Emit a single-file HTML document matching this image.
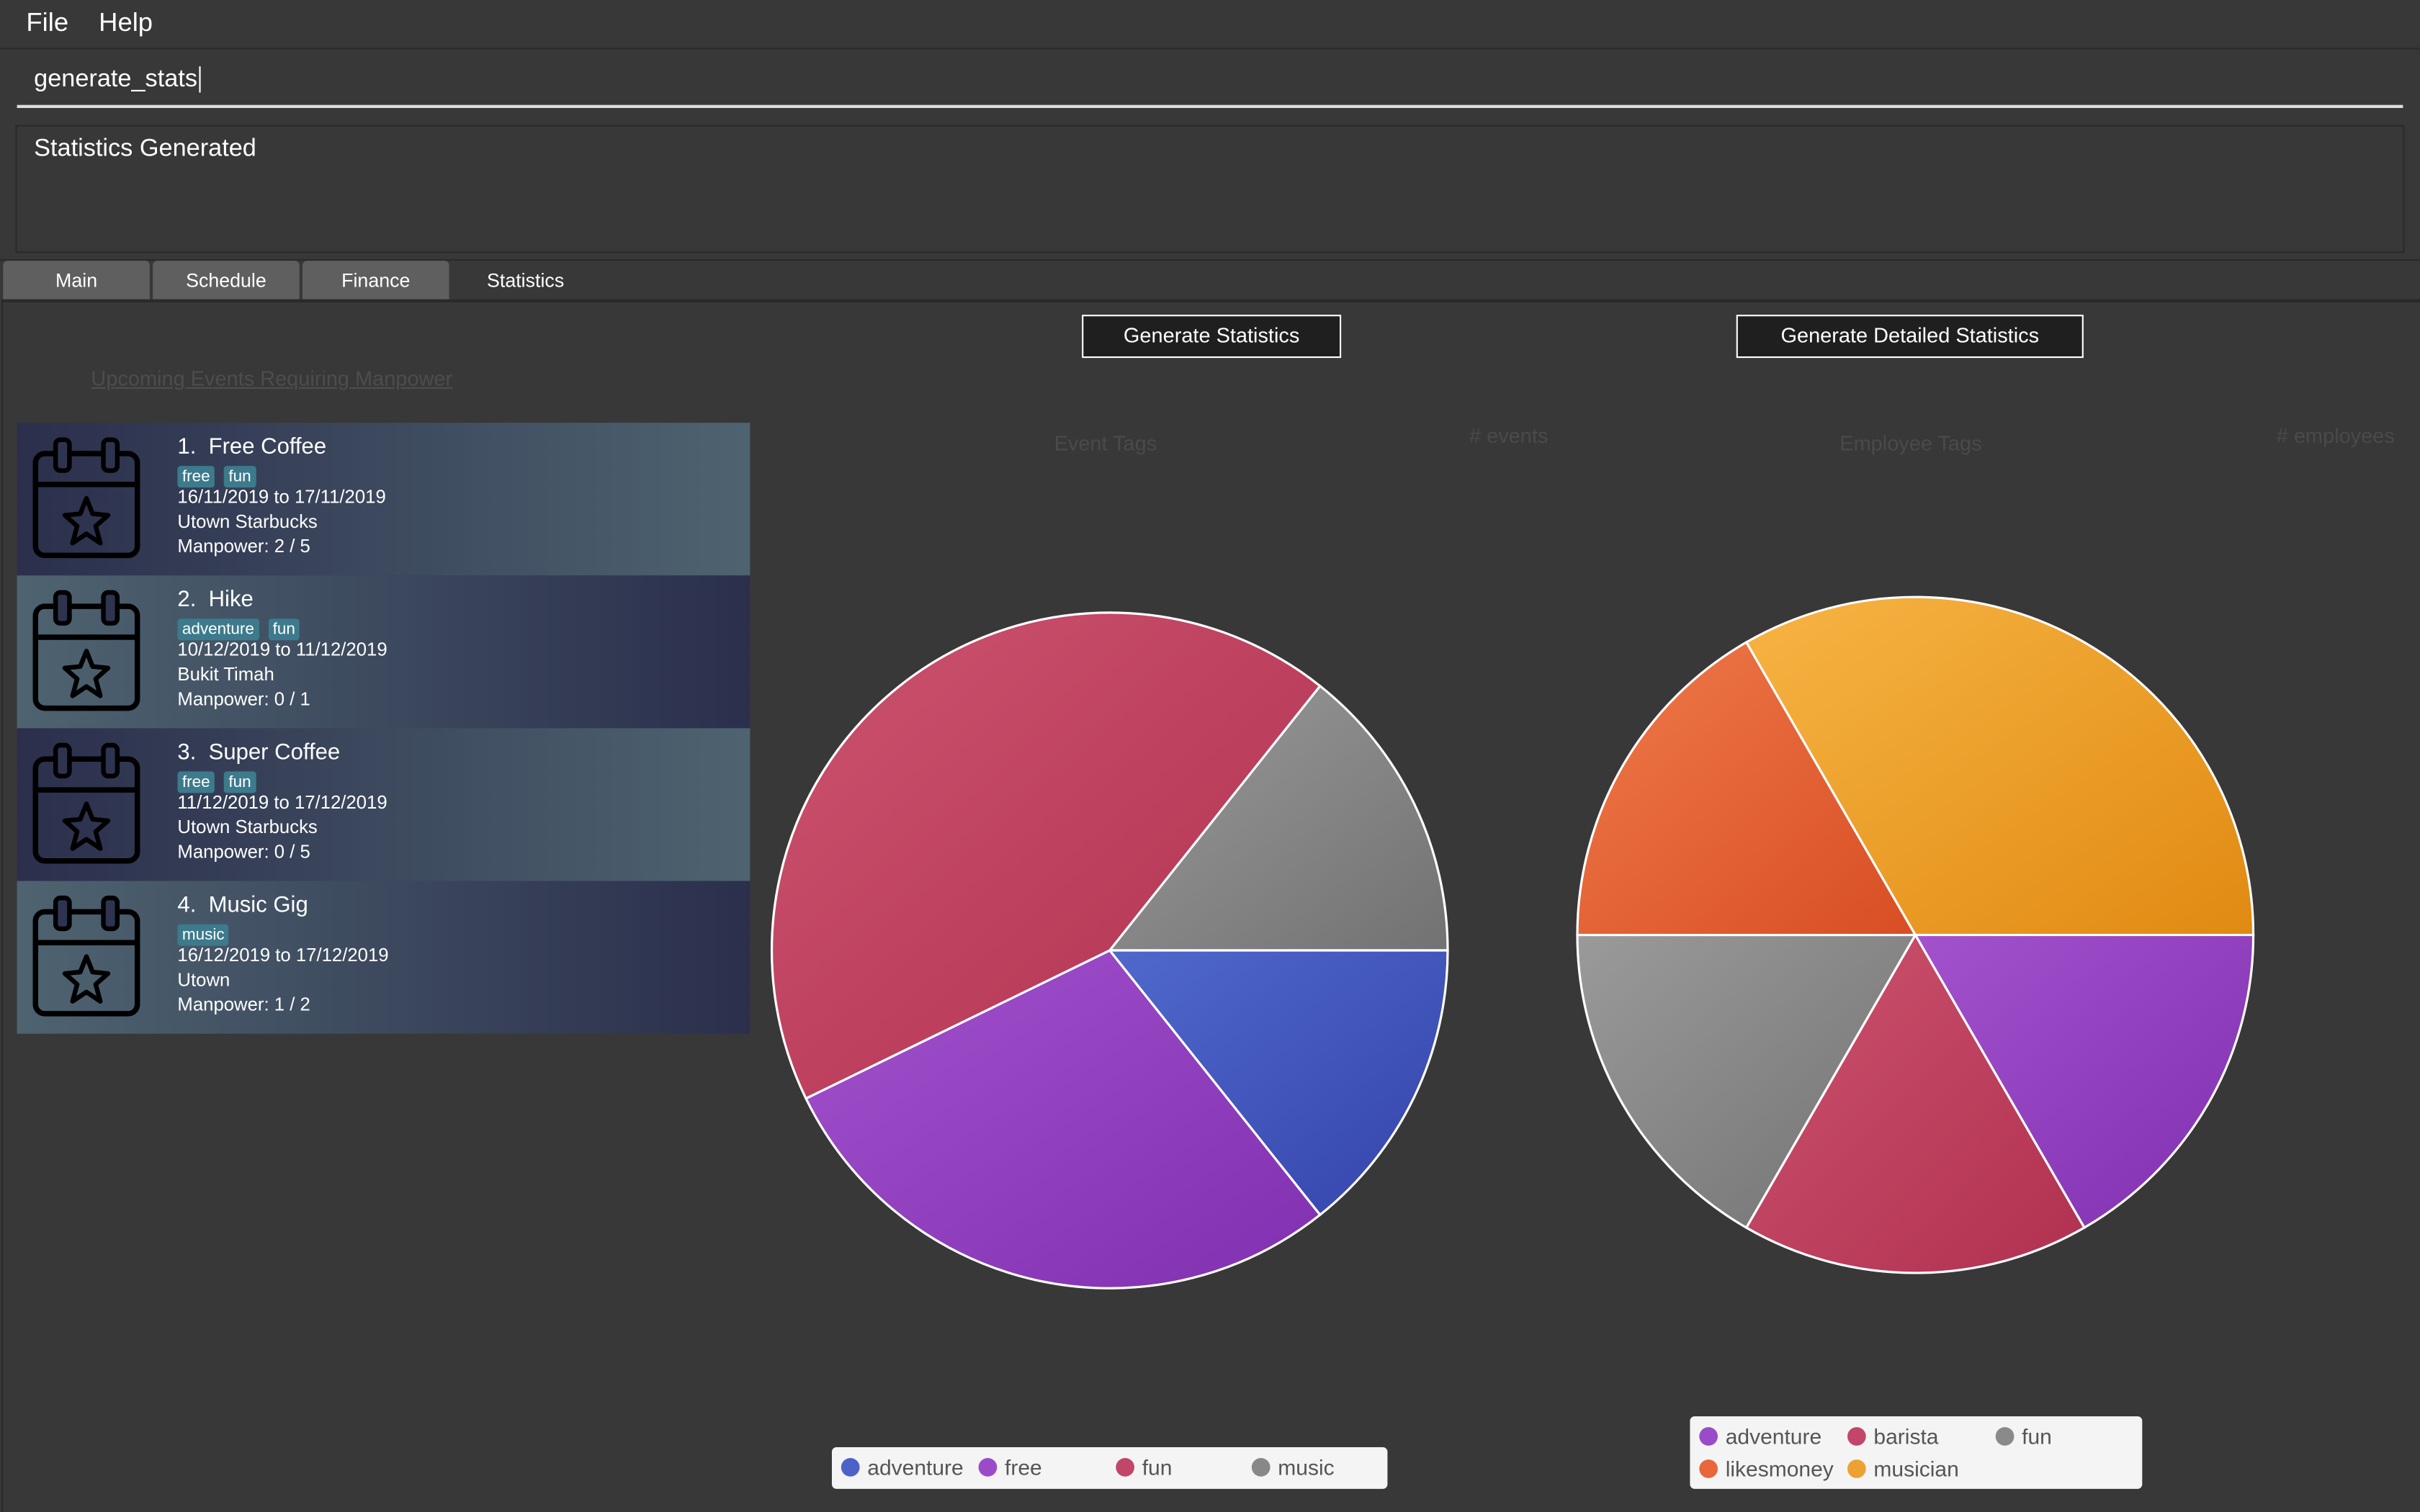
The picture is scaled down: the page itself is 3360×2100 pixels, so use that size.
<!DOCTYPE html>
<html><head><meta charset="utf-8"><style>
html,body{margin:0;padding:0;background:#383838;width:3360px;height:2100px;overflow:hidden}
#w{position:absolute;left:0;top:0;width:1568px;height:980px;transform:scale(2.142857);transform-origin:0 0;font-family:"Liberation Sans",sans-serif;color:#fff}
.a{position:absolute}
.card{position:absolute;left:11px;width:475px;height:99px}
.c1{background:linear-gradient(90deg,#2b2f4c,#4e6370)}
.c2{background:linear-gradient(90deg,#4e6370,#2b2f4c)}
.card .t{position:absolute;left:104px;top:8px;font-size:14.5px}
.card .l{position:absolute;left:104px;font-size:12px}
.tag{display:inline-block;background:#3c7a8c;font-size:10.5px;padding:0 3px;margin-right:6px;border-radius:2px;line-height:14px}
.tab{position:absolute;top:169px;height:25px;width:95px;background:#5f5f5f;border-radius:3px 3px 0 0;font-size:12.5px;text-align:center;line-height:26px}
.btn{position:absolute;top:204px;height:26px;border:1.5px solid #fff;background:#1f1f1f;font-size:13.5px;text-align:center;line-height:26px}
.leg{position:absolute;background:#f4f4f4;border-radius:3px;color:#555;font-size:14px}
.leg span{position:absolute}
.dot{display:inline-block;width:12px;height:12px;border-radius:50%;vertical-align:-1px;margin-right:5px}
.cap{position:absolute;color:#4a4a4a;font-size:13.5px}
</style></head><body><div id="w">
<div class="a" style="left:17px;top:5px;font-size:17px">File</div>
<div class="a" style="left:64px;top:5px;font-size:17px">Help</div>
<div class="a" style="left:0;top:31px;width:1568px;height:1px;background:#2a2a2a"></div>
<div class="a" style="left:22px;top:43px;font-size:16px">generate_stats<span style="border-left:1px solid #fff;margin-left:1px"></span></div>
<div class="a" style="left:11px;top:68px;width:1546px;height:1.5px;background:#ddd"></div>
<div class="a" style="left:10px;top:81px;width:1546px;height:81px;border:1px solid #2a2a2a"></div>
<div class="a" style="left:22px;top:88px;font-size:16px">Statistics Generated</div>
<div class="a" style="left:0;top:168px;width:1568px;height:1px;background:#2a2a2a"></div>
<div class="tab" style="left:2px">Main</div>
<div class="tab" style="left:99px">Schedule</div>
<div class="tab" style="left:196px">Finance</div>
<div class="a" style="left:293px;top:169px;width:95px;font-size:12.5px;text-align:center;line-height:26px">Statistics</div>
<div class="a" style="left:1px;top:194px;width:1567px;height:786px;border-left:1px solid #2a2a2a;border-top:2px solid #2a2a2a;box-sizing:border-box"></div>
<div class="a" style="left:59px;top:238px;font-size:13.5px;color:#4d4d4d;text-decoration:underline">Upcoming Events Requiring Manpower</div>

<svg width="0" height="0" style="position:absolute"><defs>
<g id="cal"><rect x="12" y="16" width="66" height="66" rx="6" fill="none" stroke="#000" stroke-width="3.5"/><line x1="12" y1="36" x2="78" y2="36" stroke="#000" stroke-width="3.5"/><rect x="25" y="7" width="9" height="20" rx="3" fill="#2e3450" stroke="#000" stroke-width="3"/><rect x="56" y="7" width="9" height="20" rx="3" fill="#2e3450" stroke="#000" stroke-width="3"/><path d="M45 45 L49 55 L59 56 L51 63 L54 74 L45 68 L36 74 L39 63 L31 56 L41 55 Z" fill="none" stroke="#000" stroke-width="3" stroke-linejoin="round"/></g>
</defs></svg>

<div class="card c1" style="top:274px"><svg class="a" style="left:0;top:4px" width="90" height="90"><use href="#cal"/></svg><div class="t">1.&nbsp; Free Coffee</div><div class="l" style="top:27px"><span class="tag">free</span><span class="tag">fun</span></div><div class="l" style="top:41px">16/11/2019 to 17/11/2019</div><div class="l" style="top:57px">Utown Starbucks</div><div class="l" style="top:73px">Manpower: 2 / 5</div></div>
<div class="card c2" style="top:373px"><svg class="a" style="left:0;top:4px" width="90" height="90"><use href="#cal"/></svg><div class="t">2.&nbsp; Hike</div><div class="l" style="top:27px"><span class="tag">adventure</span><span class="tag">fun</span></div><div class="l" style="top:41px">10/12/2019 to 11/12/2019</div><div class="l" style="top:57px">Bukit Timah</div><div class="l" style="top:73px">Manpower: 0 / 1</div></div>
<div class="card c1" style="top:472px"><svg class="a" style="left:0;top:4px" width="90" height="90"><use href="#cal"/></svg><div class="t">3.&nbsp; Super Coffee</div><div class="l" style="top:27px"><span class="tag">free</span><span class="tag">fun</span></div><div class="l" style="top:41px">11/12/2019 to 17/12/2019</div><div class="l" style="top:57px">Utown Starbucks</div><div class="l" style="top:73px">Manpower: 0 / 5</div></div>
<div class="card c2" style="top:571px"><svg class="a" style="left:0;top:4px" width="90" height="90"><use href="#cal"/></svg><div class="t">4.&nbsp; Music Gig</div><div class="l" style="top:27px"><span class="tag">music</span></div><div class="l" style="top:41px">16/12/2019 to 17/12/2019</div><div class="l" style="top:57px">Utown</div><div class="l" style="top:73px">Manpower: 1 / 2</div></div>

<div class="btn" style="left:701px;width:166px">Generate Statistics</div>
<div class="btn" style="left:1125px;width:223px">Generate Detailed Statistics</div>
<div class="cap" style="left:683px;top:280px">Event Tags</div>
<div class="cap" style="left:952px;top:275px"># events</div>
<div class="cap" style="left:1192px;top:280px">Employee Tags</div>
<div class="cap" style="left:1475px;top:275px"># employees</div>

<svg class="a" style="left:0;top:0" width="1568" height="980">
<defs>
<linearGradient id="gr" x1="0" y1="0" x2="1" y2="1"><stop offset="0" stop-color="#cc5470"/><stop offset="1" stop-color="#b0304f"/></linearGradient>
<linearGradient id="gg" x1="0" y1="0" x2="1" y2="1"><stop offset="0" stop-color="#9a9a9a"/><stop offset="1" stop-color="#727272"/></linearGradient>
<linearGradient id="gb" x1="0" y1="0" x2="1" y2="1"><stop offset="0" stop-color="#5068cc"/><stop offset="1" stop-color="#3444aa"/></linearGradient>
<linearGradient id="gp" x1="0" y1="0" x2="1" y2="1"><stop offset="0" stop-color="#a252cc"/><stop offset="1" stop-color="#8030b0"/></linearGradient>
<linearGradient id="go" x1="0" y1="0" x2="1" y2="1"><stop offset="0" stop-color="#f7b444"/><stop offset="1" stop-color="#e08a12"/></linearGradient>
<linearGradient id="gl" x1="0" y1="0" x2="1" y2="1"><stop offset="0" stop-color="#ef7a4a"/><stop offset="1" stop-color="#d84e24"/></linearGradient>
</defs>
<g stroke="#fff" stroke-width="1.5">
<path d="M719 616 L855.3 444.6 A219 219 0 0 1 938 616 Z" fill="url(#gg)"/>
<path d="M719 616 L938 616 A219 219 0 0 1 855.3 787.4 Z" fill="url(#gb)"/>
<path d="M719 616 L855.3 787.4 A219 219 0 0 1 522.2 712 Z" fill="url(#gp)"/>
<path d="M719 616 L522.2 712 A219 219 0 0 1 855.3 444.6 Z" fill="url(#gr)"/>
<path d="M1241 606 L1131.5 416.3 A219 219 0 0 1 1460 606 Z" fill="url(#go)"/>
<path d="M1241 606 L1460 606 A219 219 0 0 1 1350.5 795.7 Z" fill="url(#gp)"/>
<path d="M1241 606 L1350.5 795.7 A219 219 0 0 1 1131.5 795.7 Z" fill="url(#gr)"/>
<path d="M1241 606 L1131.5 795.7 A219 219 0 0 1 1022 606 Z" fill="url(#gg)"/>
<path d="M1241 606 L1022 606 A219 219 0 0 1 1131.5 416.3 Z" fill="url(#gl)"/>
</g></svg>

<div class="leg" style="left:539px;top:938px;width:360px;height:27px">
<span style="left:6px;top:5px"><i class="dot" style="background:#4c62c8"></i>adventure</span>
<span style="left:95px;top:5px"><i class="dot" style="background:#9a4cc8"></i>free</span>
<span style="left:184px;top:5px"><i class="dot" style="background:#c2466a"></i>fun</span>
<span style="left:272px;top:5px"><i class="dot" style="background:#888"></i>music</span>
</div>
<div class="leg" style="left:1095px;top:918px;width:293px;height:47px">
<span style="left:6px;top:5px"><i class="dot" style="background:#9a4cc8"></i>adventure</span>
<span style="left:102px;top:5px"><i class="dot" style="background:#c2466a"></i>barista</span>
<span style="left:198px;top:5px"><i class="dot" style="background:#8a8a8a"></i>fun</span>
<span style="left:6px;top:26px"><i class="dot" style="background:#e8683c"></i>likesmoney</span>
<span style="left:102px;top:26px"><i class="dot" style="background:#eca232"></i>musician</span>
</div>
</div></body></html>
